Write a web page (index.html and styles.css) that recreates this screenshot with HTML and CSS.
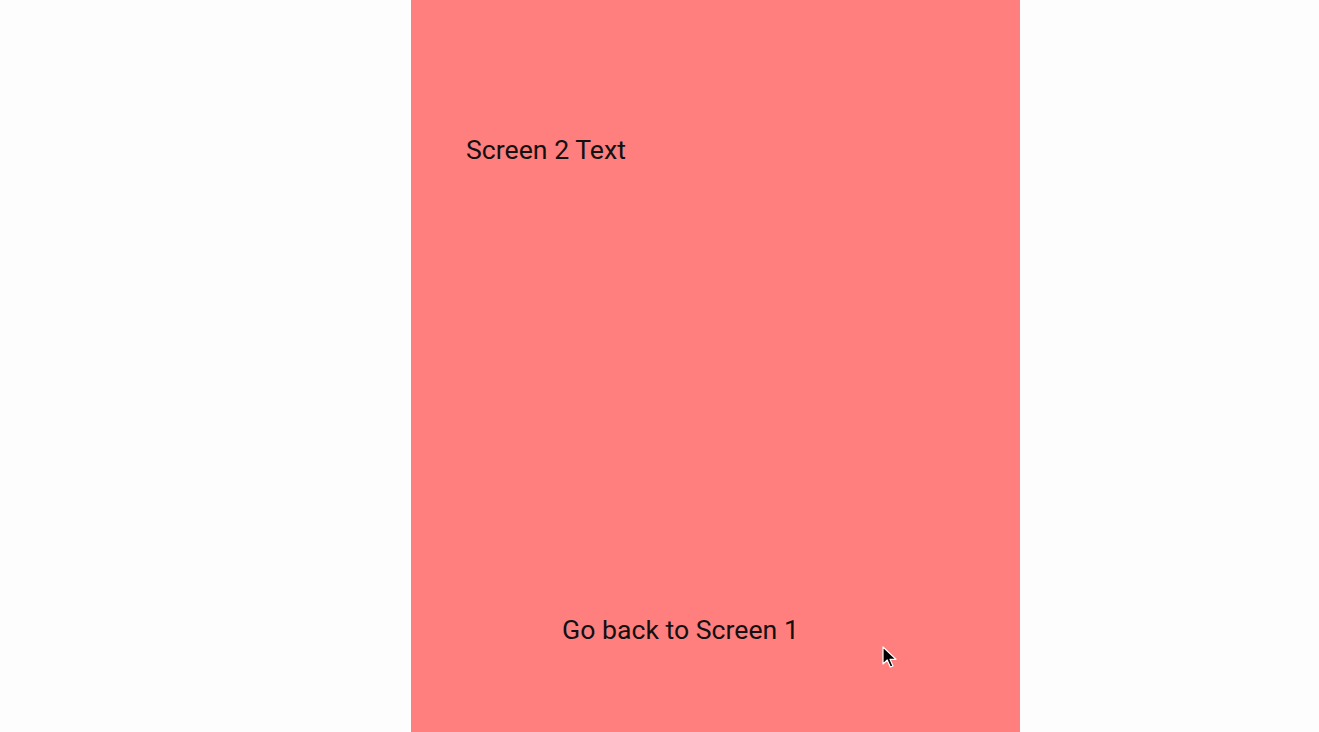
FILE: index.html
```html
<!DOCTYPE html>
<html>
<head>
<meta charset="utf-8">
<link rel="stylesheet" href="styles.css">
</head>
<body>
<div class="page">
  <div class="screen">
    <div class="title">Screen 2 Text</div>
    <div class="spacer"></div>
    <div class="action">Go back to Screen 1</div>
    <svg class="cursor" width="15" height="23" viewBox="0 0 15 23">
      <path d="M1 1 L1 18 L5.2 14 L8.3 21 L11 20 L8 13.3 L14 13.3 Z" fill="#000" stroke="#fff" stroke-width="1.2" stroke-linejoin="round"/>
    </svg>
  </div>
</div>
</body>
</html>
```
FILE: styles.css
```css
html, body {
  margin: 0;
  padding: 0;
  background: #fdfdfd;
  height: 100%;
}
.page {
  display: flex;
  justify-content: flex-start;
  height: 732px;
  padding-left: 411px;
  box-sizing: border-box;
}
.screen {
  position: relative;
  width: 609px;
  height: 732px;
  background: #ff7f7f;
  display: flex;
  flex-direction: column;
  font-family: Roboto, "Liberation Sans", sans-serif;
  color: #111;
}
.title {
  font-size: 26.67px;
  line-height: 30px;
  margin-top: 135px;
  margin-left: 55px;
}
.spacer {
  flex: 1;
}
.action {
  font-size: 26.67px;
  line-height: 30px;
  margin-left: 151px;
  margin-bottom: 87px;
}
.cursor {
  position: absolute;
  left: 471px;
  top: 646px;
}
```
